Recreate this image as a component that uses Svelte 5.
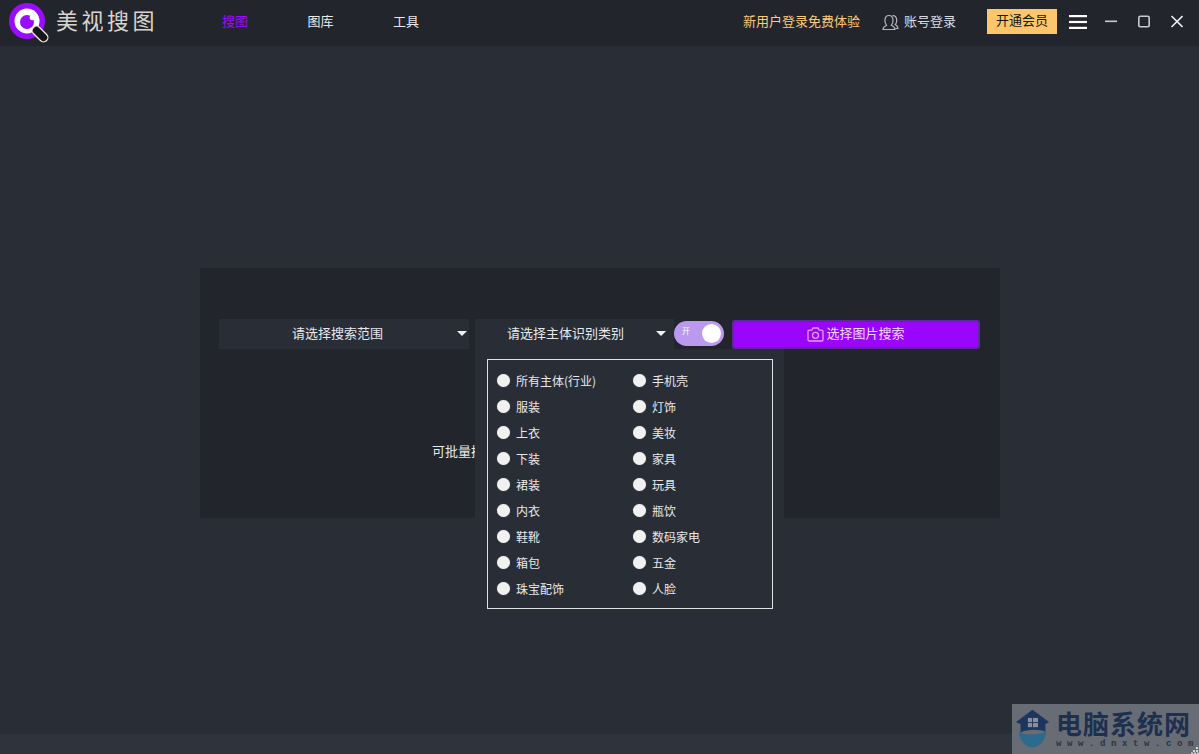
<script>
  const left = ['所有主体(行业)', '服装', '上衣', '下装', '裙装', '内衣', '鞋靴', '箱包', '珠宝配饰'];
  const right = ['手机壳', '灯饰', '美妆', '家具', '玩具', '瓶饮', '数码家电', '五金', '人脸'];
  const nav = ['搜图', '图库', '工具'];
</script>

<div class="app">
  <header class="titlebar">
    <div class="brand">
      <svg class="logo" width="40" height="42" viewBox="0 0 40 42">
        <circle cx="18" cy="19" r="18" fill="#9a0cff" />
        <circle cx="18" cy="19" r="12.500" fill="#fff" />
        <circle cx="18" cy="20" r="7" fill="#9a0cff" />
        <circle cx="23.500" cy="15.500" r="2.800" fill="#fff" />
        <path d="M27.500 28.500L34.500 35.500" stroke="#efeadf" stroke-width="10" stroke-linecap="round" />
        <path d="M27.500 28.500L34.500 35.500" stroke="#15171b" stroke-width="7.400" stroke-linecap="round" />
      </svg>
      <span class="brandname">美视搜图</span>
    </div>
    <nav class="nav">
      {#each nav as item, i}
        <span class:active={i === 0}>{item}</span>
      {/each}
    </nav>
    <div class="right">
      <span class="promo">新用户登录免费体验</span>
      <span class="login">
        <svg width="17" height="17" viewBox="0 0 17 17" fill="none" stroke="#b6b8bd" stroke-width="1.200">
          <path d="M1 15.500c0-2.500 1.700-3.200 3.600-4.200-1.200-1.300-1.700-2.600-1.700-4.500C2.900 3.500 4.700 1.500 7 1.500s4 2 4 5.300c0 1.900-.6 3.200-1.700 4.500 1.900 1 3.700 1.700 3.700 4.200z" />
          <path d="M10.500 1.700c2.400-.4 4.200 1.500 4.200 4.700 0 1.800-.5 3-1.500 4.200 1.200.7 2.800 1.300 2.800 3.900h-2.500" />
        </svg>
        账号登录
      </span>
      <button class="vip">开通会员</button>
      <svg class="menu" width="18" height="14" viewBox="0 0 18 14" fill="#fff">
        <rect width="18" height="2.200" />
        <rect y="5.900" width="18" height="2.200" />
        <rect y="11.800" width="18" height="2.200" />
      </svg>
      <div class="winbtns">
        <svg width="13" height="13" viewBox="0 0 13 13"><rect x="1" y="5.500" width="12" height="1.600" fill="#c8cace" /></svg>
        <svg width="13" height="13" viewBox="0 0 13 13"><rect x="1.800" y="1.200" width="10.400" height="10.600" rx="1.500" fill="none" stroke="#c8cace" stroke-width="1.600" /></svg>
        <svg width="13" height="13" viewBox="0 0 13 13"><path d="M1.500 1l11 11M12.500 1l-11 11" stroke="#eceded" stroke-width="1.600" /></svg>
      </div>
    </div>
  </header>

  <main class="main">
    <section class="panel">
      <div class="controls">
        <div class="select first">
          <span>请选择搜索范围</span>
          <i class="caret"></i>
        </div>
        <div class="select second">
          <span>请选择主体识别类别</span>
          <i class="caret"></i>
          <div class="dropdown">
            <div class="optbox">
              <div class="col">
                {#each left as o}
                  <label class="opt"><i class="radio"></i>{o}</label>
                {/each}
              </div>
              <div class="col">
                {#each right as o}
                  <label class="opt"><i class="radio"></i>{o}</label>
                {/each}
              </div>
            </div>
          </div>
        </div>
        <div class="toggle">
          <span class="on">开</span>
          <i class="knob"></i>
        </div>
        <button class="search">
          <svg width="17" height="15" viewBox="0 0 17 15" fill="none" stroke="#e79cff" stroke-width="1.300">
            <path d="M1 4.500c0-.8.500-1.300 1.300-1.300h2.500L6 1h5l1.200 2.200h2.500c.8 0 1.300.5 1.300 1.300v8.200c0 .8-.5 1.300-1.300 1.300H2.300c-.8 0-1.300-.5-1.300-1.300z" />
            <circle cx="8.500" cy="8.300" r="3" />
          </svg>
          <span>选择图片搜索</span>
        </button>
      </div>
      <p class="hint">可批量搜索图片</p>
    </section>
  </main>

  <footer class="statusbar"></footer>

  <aside class="watermark">
    <svg width="38" height="42" viewBox="0 0 38 42">
      <path d="M19 0L37 13.500 33 15.500V24C27 21 12 21 6 25V15.500L1 13.500z" fill="#1e3560" />
      <rect x="14" y="9" width="11" height="10" fill="#8b8f96" />
      <path d="M19 9v10M14 14h11" stroke="#1e3560" stroke-width="1" />
      <path d="M4 24c8 5 22 3 30 0-1 10-8 17-15 17S5 34 4 24z" fill="#2c6b8e" />
    </svg>
    <div class="wmtext">
      <b>电脑系统网</b>
      <small>www.dnxtw.com</small>
    </div>
    <svg class="grip" width="8" height="7" viewBox="0 0 8 7" fill="#d8d8d8">
      <rect x="5" y="0" width="2" height="2" />
      <rect x="2" y="3" width="2" height="2" />
      <rect x="5" y="3" width="2" height="2" />
      <rect x="0" y="5.500" width="2" height="1.500" />
      <rect x="3" y="5.500" width="2" height="1.500" />
      <rect x="6" y="5.500" width="2" height="1.500" />
    </svg>
  </aside>
</div>

<style>
  :global(body) {
    margin: 0;
    background: #292d36;
  }

  .app {
    position: relative;
    display: flex;
    flex-direction: column;
    width: 1199px;
    height: 754px;
    overflow: hidden;
    background: #292d36;
    color: #e8e8ea;
    font: 400 13px "Noto Sans CJK SC", "Liberation Sans", sans-serif;
  }

  .titlebar {
    display: flex;
    align-items: center;
    flex: none;
    height: 46px;
    background: #22252c;
  }

  .brand {
    display: flex;
    align-items: center;
    gap: 7px;
    width: 222px;
    padding-left: 9px;
    box-sizing: border-box;
  }

  .logo {
    flex: none;
  }

  .brandname {
    margin-bottom: 8px;
    color: #d8d5ce;
    font-size: 22px;
    letter-spacing: 3.500px;
    white-space: nowrap;
    line-height: 30px;
  }

  .nav {
    display: flex;
    gap: 59.500px;
    margin-bottom: 5px;
  }

  .nav span {
    color: #e8e8ea;
  }

  .nav .active {
    color: #9a0cff;
  }

  .right {
    display: flex;
    align-items: center;
    margin-left: auto;
    margin-bottom: 3px;
  }

  .promo {
    margin: 0 22px 2px 0;
    color: #ffca75;
  }

  .login {
    display: flex;
    align-items: center;
    gap: 5px;
    margin: 0 31px 2px 0;
    color: #dcdde0;
  }

  .login svg {
    margin-top: 3px;
  }

  .vip {
    width: 70px;
    height: 25px;
    padding: 0 0 3px;
    border: 0;
    background: #fdc66a;
    color: #14161a;
    font: inherit;
    line-height: 20px;
  }

  .menu {
    flex: none;
    margin-left: 12px;
  }

  .winbtns {
    display: flex;
    gap: 20px;
    margin: 0 16px 0 17px;
  }

  .main {
    flex: 1;
    padding-top: 222px;
  }

  .statusbar {
    flex: none;
    height: 20px;
    background: #2f333c;
  }

  .panel {
    box-sizing: border-box;
    width: 800px;
    height: 250px;
    margin-left: 200px;
    padding: 51px 19px 0;
    background: #22252c;
  }

  .controls {
    display: flex;
    align-items: center;
    height: 30px;
  }

  .select {
    position: relative;
    display: flex;
    align-items: center;
    height: 30px;
    box-sizing: border-box;
    padding-bottom: 4px;
    background: #292d36;
  }

  .first {
    width: 250px;
    margin-right: 6px;
    padding-left: 73px;
  }

  .second {
    width: 199px;
    padding-left: 32px;
  }

  .caret {
    position: absolute;
    top: 12px;
    width: 0;
    height: 0;
    border: 5px solid transparent;
    border-top: 5px solid #f0f0f2;
    border-bottom: 0;
  }

  .first .caret {
    right: 2px;
  }

  .second .caret {
    right: 8px;
  }

  .dropdown {
    position: absolute;
    left: 0;
    top: 30px;
    z-index: 2;
    box-sizing: border-box;
    width: 309px;
    height: 270px;
    padding: 10px 12px;
    background: #292d36;
  }

  .optbox {
    display: flex;
    box-sizing: border-box;
    width: 286px;
    height: 250px;
    padding: 7px 9px 0;
    border: 1px solid #dfe1e5;
  }

  .col {
    flex: none;
    width: 136px;
  }

  .opt {
    display: flex;
    align-items: center;
    gap: 6px;
    height: 26px;
    font-size: 12px;
    color: #e8e8ea;
  }

  .radio {
    flex: none;
    width: 13px;
    height: 13px;
    border-radius: 50%;
    background: #f1f1f1;
    box-shadow: 0 0 1px 0 #8a8a8a;
  }

  .toggle {
    position: relative;
    flex: none;
    width: 50px;
    height: 25px;
    margin: 0 8px 2px 0;
    border-radius: 13px;
    background: #bb99ee;
  }

  .on {
    position: absolute;
    left: 8px;
    top: 3px;
    color: #fff;
    font-size: 8px;
    line-height: 14px;
  }

  .knob {
    position: absolute;
    right: 3px;
    top: 3px;
    width: 19px;
    height: 19px;
    border-radius: 50%;
    background: #fff;
  }

  .search {
    display: flex;
    align-items: center;
    justify-content: center;
    gap: 2px;
    flex: none;
    box-sizing: border-box;
    width: 248px;
    height: 29px;
    padding: 0;
    border: 2px solid #5d2b96;
    border-radius: 3px;
    background: #9a05fb;
    color: #f3d8ff;
    font: inherit;
  }

  .search span {
    margin-bottom: 3px;
  }

  .hint {
    margin: 92px 0 0 213px;
    line-height: 20px;
  }

  .watermark {
    position: absolute;
    right: 0;
    bottom: 0;
    display: flex;
    align-items: center;
    gap: 6px;
    box-sizing: border-box;
    width: 187px;
    height: 50px;
    padding-left: 3px;
    background: #686c75;
  }

  .wmtext {
    display: flex;
    flex-direction: column;
    color: #1e3050;
  }

  .wmtext b {
    font-size: 26px;
    font-weight: 700;
    line-height: 30px;
    letter-spacing: 1px;
    white-space: nowrap;
  }

  .wmtext small {
    font: 700 9px "Liberation Mono", monospace;
    letter-spacing: 5.600px;
    line-height: 12px;
    color: #2a3444;
    white-space: nowrap;
  }

  .grip {
    position: absolute;
    right: 0;
    bottom: 0;
  }
</style>
